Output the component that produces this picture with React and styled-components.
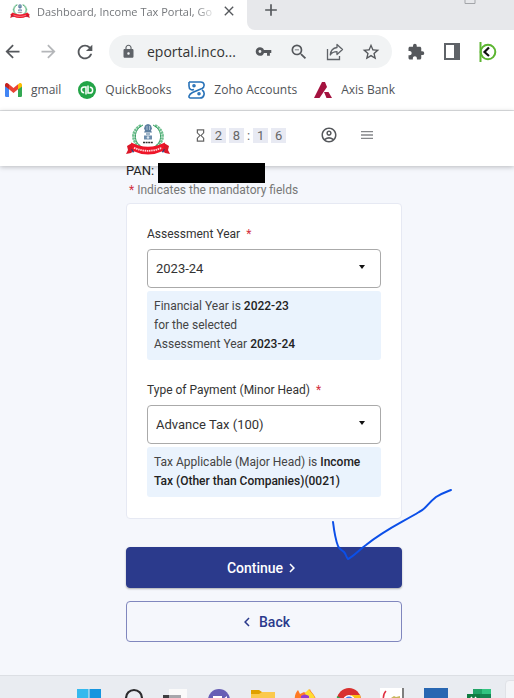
import React from 'react';
import styled, { createGlobalStyle } from 'styled-components';
import {
  MdAdd,
  MdArrowBack,
  MdArrowForward,
  MdChevronLeft,
  MdChevronRight,
  MdClose,
  MdExtension,
  MdHourglassEmpty,
  MdLock,
  MdMenu,
  MdOutlineAccountCircle,
  MdRefresh,
  MdStarBorder,
  MdVpnKey,
  MdZoomOut,
} from 'react-icons/md';

const Emblem = ({ size }) => (
  <svg width={size} height={Math.round(size * 0.78)} viewBox="0 0 44 34" aria-hidden="true">
    <path d="M15 3.500C5 8 5 20 14 24.500M29 3.500C39 8 39 20 30 24.500" fill="none" stroke="#6fc08f" strokeWidth="2.600" strokeDasharray="2.400 .6" />
    <path d="M17 3C7 8 7 20 16 25M27 3C37 8 37 20 28 25" fill="none" stroke="#2f9a5c" strokeWidth="1" />
    <path d="M19 3.500q3-3 6 0l1 3-1 2 1 2h-8l1-2-1-2z" fill="#5d7fa0" />
    <path d="M20 11h4v2h-4z" fill="#9fb5c8" />
    <path d="M18 13.500h8v4h-8z" fill="#6d8dac" />
    <circle cx="22" cy="15.500" r="1.300" fill="#d9e5ef" />
    <path d="M21 4v4M23.500 4v4" stroke="#b8cbdb" strokeWidth=".8" />
    <path d="M17 20.500h10" stroke="#333" strokeWidth="1.300" strokeDasharray="2 .6" />
    <path d="M1 24l5-3 2 7-3 3-5 1 2-4zM43 24l-5-3-2 7 3 3 5 1-2-4z" fill="#db1728" />
    <path d="M5 27l4 1-2 3zM39 27l-4 1 2 3z" fill="#24407c" />
    <path d="M5 20.500q17 8.500 34 0l-2 8.500q-15 7-30 0z" fill="#ee1528" />
    <path d="M8 25.800q14 6 28 0" fill="none" stroke="#ffd7da" strokeWidth="1.800" strokeDasharray="1.500 .7" />
  </svg>
);

const ShareIcon = () => (
  <svg width="18" height="18" viewBox="0 0 18 18" fill="none" stroke="#5f6368" strokeWidth="1.300" aria-hidden="true">
    <path d="M1.500 6v10.500h12V13" />
    <path d="M11 1.500l5.500 5-5.500 5V8.700c-3.500 0-5.500 1.200-6.700 3.300.3-4 2.700-7 6.700-7.500z" strokeLinejoin="round" />
  </svg>
);

const SidePanelIcon = () => (
  <svg width="16" height="17" viewBox="0 0 16 17" aria-hidden="true">
    <path d="M1 1h14v15H1z" fill="none" stroke="#5f6368" strokeWidth="2" />
    <path d="M10 1h6v15h-6z" fill="#5f6368" />
  </svg>
);

const KeeperIcon = () => (
  <svg width="18" height="20" viewBox="0 0 18 20" fill="none" aria-hidden="true">
    <circle cx="9" cy="10" r="7.300" stroke="#5cb531" strokeWidth="2" />
    <path d="M1.500 0v20" stroke="#5cb531" strokeWidth="2" />
    <path d="M10 5.500L5.500 10l4.500 4" stroke="#111" strokeWidth="2.200" />
  </svg>
);

const GmailIcon = () => (
  <svg width="17" height="14" viewBox="0 0 17 14" aria-hidden="true">
    <path d="M0 2.500l4 3V14H1.200Q0 14 0 12.800z" fill="#4285f4" />
    <path d="M17 2.500l-4 3V14h2.800q1.200 0 1.200-1.200z" fill="#34a853" />
    <path d="M13 1.500v5l4-3V2c0-2-2-2.600-3-1.500z" fill="#fbbc04" />
    <path d="M4 1.300L8.500 5 13 1.300v5L8.500 10 4 6.300z" fill="#ea4335" />
    <path d="M0 2C0 0 2-.6 3 .5l1 .8v5l-4-3z" fill="#c5221f" />
  </svg>
);

const QuickBooksIcon = () => (
  <svg width="18" height="18" viewBox="0 0 18 18" aria-hidden="true">
    <circle cx="9" cy="9" r="9" fill="#23a447" />
    <path d="M8 13.500V6H6.200a2.800 2.800 0 000 5.700M10 4.500V12h1.800a2.800 2.800 0 000-5.700" fill="none" stroke="#fff" strokeWidth="1.500" />
  </svg>
);

const ZohoIcon = () => (
  <svg width="17" height="18" viewBox="0 0 17 18" fill="none" stroke="#2872b8" strokeWidth="1.600" strokeLinejoin="round" aria-hidden="true">
    <path d="M1 1h11.500c4.500 0 4.500 5 1.500 6.500L4.500 11.500C.5 13.500 0 17 2.500 17H12c4.500 0 5.500-6 2-8" />
    <path d="M1 1v4c0 3.500 2.500 4.500 5 3.500" />
    <circle cx="6" cy="4.700" r="1" />
    <circle cx="11" cy="12.800" r="1" />
  </svg>
);

const AxisIcon = () => (
  <svg width="18" height="16" viewBox="0 0 18 16" fill="#a4123f" aria-hidden="true">
    <path d="M8 0h3l2 5L5.500 16H0z" />
    <path d="M10 10h4.500L18 16h-5.500z" />
  </svg>
);

const TASKS = [
  {
    name: 'Start',
    art: (
      <>
        <path d="M0 0h11.500v11H0zM0 12h11.500v11H0z" fill="#35b9ee" />
        <path d="M12.500 0H24v11H12.500zM12.500 12H24v11H12.500z" fill="#1695df" />
      </>
    ),
  },
  { name: 'Search', art: <circle cx="14" cy="9" r="8" fill="none" stroke="#2c2c2e" strokeWidth="2.200" /> },
  {
    name: 'Task View',
    art: (
      <>
        <path d="M6 0h18v16H6z" fill="#fafafa" />
        <path d="M0 6h18v14H0z" fill="#3d3d40" />
        <path d="M6 6h12v10H6z" fill="#a7a7ac" />
      </>
    ),
  },
  {
    name: 'Chat',
    art: (
      <>
        <circle cx="13" cy="11" r="11" fill="#675eb5" />
        <path d="M7 7h9v9H7zM17 10l4-3v9l-4-3z" fill="#fff" />
      </>
    ),
  },
  {
    name: 'Files',
    art: (
      <>
        <path d="M2 1h8l3 2h13v18H2z" fill="#e0a000" />
        <path d="M2 5h8l3-2h13v18H2z" fill="#fbc94d" />
      </>
    ),
  },
  {
    name: 'Firefox',
    art: (
      <>
        <path d="M3 12C2 7 4 3 6 1l2 4 4-2c2 2 4-1 6-3 1 4 6 6 6 12a10 10 0 01-21 0z" fill="#ff7a25" />
        <path d="M13 4l4-4c1 4 6 5 6 11h-8z" fill="#ffdc32" />
        <path d="M9 7q4-3 8 0v4H9z" fill="#933bd0" />
      </>
    ),
  },
  {
    name: 'Chrome',
    art: (
      <>
        <circle cx="14" cy="11" r="12" fill="#d9302f" />
        <path d="M2 7l7 4v12C4 20 1 14 2 7z" fill="#32a853" />
        <path d="M16 6h9c2 6 0 13-7 17z" fill="#fbc116" />
        <circle cx="14" cy="12" r="6" fill="#fff" />
        <circle cx="14" cy="12" r="4.500" fill="#4285f4" />
      </>
    ),
  },
  {
    name: 'Paint',
    art: (
      <>
        <path d="M2-1h24v20H2z" fill="#fff" />
        <path d="M25-1v20" stroke="#555" strokeWidth="1.500" />
        <path d="M8 2Q4 6 6 14" fill="none" stroke="#e03142" strokeWidth="1.500" />
        <path d="M13 9l3-2 2 1 4-1v4h-9z" fill="#c9b65d" />
      </>
    ),
  },
  { name: 'Remote Desktop', art: <path d="M3-1h24v20H3z" fill="#2867b2" /> },
  {
    name: 'Excel',
    art: (
      <>
        <path d="M9 0h9v20H9z" fill="#21a366" />
        <path d="M18 0h9v20h-9z" fill="#33c481" />
        <path d="M9 5h18v8H9z" fill="#168451" />
        <path d="M3 5h13v13H3z" fill="#107c41" />
        <path d="M7 8l5 7M12 8l-5 7" stroke="#fff" strokeWidth="1.500" />
      </>
    ),
  },
];

const Field = ({ id, label, value, children }) => (
  <FieldGroup>
    <Label htmlFor={id}>
      {label} <Star>*</Star>
    </Label>
    <SelectWrap>
      <Select id={id} defaultValue={value}>
        <option>{value}</option>
      </Select>
      <Caret />
    </SelectWrap>
    <Hint>{children}</Hint>
  </FieldGroup>
);

const App = () => (
  <Screen>
    <GlobalStyle />
    <TabStrip>
      <Tab>
        <Emblem size={20} />
        <TabTitle>Dashboard, Income Tax Portal, Go</TabTitle>
        <IconButton aria-label="Close tab">
          <MdClose size={16} />
        </IconButton>
      </Tab>
      <StripRest>
        <IconButton aria-label="New tab">
          <MdAdd size={20} />
        </IconButton>
        <svg width="12" height="5" viewBox="0 0 12 5" fill="none" stroke="#a3a5a9" aria-hidden="true">
          <path d="M1 0v3.500h10V0" />
        </svg>
      </StripRest>
    </TabStrip>
    <Toolbar>
      <NavButtons>
        <IconButton aria-label="Back">
          <MdArrowBack size={21} />
        </IconButton>
        <IconButton aria-label="Forward" $color="#b4b6b9">
          <MdArrowForward size={21} />
        </IconButton>
        <IconButton aria-label="Reload">
          <MdRefresh size={22} />
        </IconButton>
      </NavButtons>
      <AddressBar>
        <MdLock size={15} />
        <Address aria-label="Address" defaultValue="eportal.inco..." />
        <AddressActions>
          <IconButton aria-label="Passwords">
            <MdVpnKey size={17} />
          </IconButton>
          <IconButton aria-label="Zoom">
            <MdZoomOut size={20} />
          </IconButton>
          <IconButton aria-label="Share">
            <ShareIcon />
          </IconButton>
          <IconButton aria-label="Bookmark">
            <MdStarBorder size={20} />
          </IconButton>
        </AddressActions>
      </AddressBar>
      <Extensions>
        <IconButton aria-label="Extensions">
          <MdExtension size={18} />
        </IconButton>
        <IconButton aria-label="Side panel">
          <SidePanelIcon />
        </IconButton>
        <IconButton aria-label="Keeper">
          <KeeperIcon />
        </IconButton>
      </Extensions>
    </Toolbar>
    <Bookmarks>
      <Bookmark href="#gmail">
        <GmailIcon />
        gmail
      </Bookmark>
      <Bookmark href="#quickbooks">
        <QuickBooksIcon />
        QuickBooks
      </Bookmark>
      <Bookmark href="#zoho">
        <ZohoIcon />
        Zoho Accounts
      </Bookmark>
      <Bookmark href="#axis">
        <AxisIcon />
        Axis Bank
      </Bookmark>
    </Bookmarks>

    <Header>
      <Emblem size={44} />
      <Timer>
        <MdHourglassEmpty size={15} />
        <Digit>2</Digit>
        <Digit>8</Digit>
        <span>:</span>
        <Digit>1</Digit>
        <Digit>6</Digit>
      </Timer>
      <HeaderActions>
        <IconButton aria-label="Profile">
          <MdOutlineAccountCircle size={18} />
        </IconButton>
        <IconButton aria-label="Menu" $color="#85878a">
          <MdMenu size={16} />
        </IconButton>
      </HeaderActions>
    </Header>

    <Main>
      <PanRow>
        PAN: <Redacted />
      </PanRow>
      <Mandatory>
        <Star>*</Star> Indicates the mandatory fields
      </Mandatory>
      <Card>
        <Field id="year" label="Assessment Year" value="2023-24">
          Financial Year is <b>2022-23</b>
          <br />
          for the selected
          <br />
          Assessment Year <b>2023-24</b>
        </Field>
        <Field id="type" label="Type of Payment (Minor Head)" value="Advance Tax (100)">
          Tax Applicable (Major Head) is <b>Income</b> <b>Tax (Other than Companies)(0021)</b>
        </Field>
      </Card>
      <Actions>
        <Button $primary>
          Continue <MdChevronRight size={18} />
        </Button>
        <Button $gap="3px">
          <MdChevronLeft size={18} /> Back
        </Button>
        <Tick width="122" height="73" viewBox="0 0 122 73" aria-hidden="true">
          <path d="M3 34c1 8 3 19 5 24 1 3 4 4 6 6 2 2 2 5 4 7 6-3 11-9 18-14 20-16 35-22 53-33 7-3 8-8 17-15 6-4 10-5 15-7" />
        </Tick>
      </Actions>
    </Main>

    <Taskbar>
      {TASKS.map(({ name, art }) => (
        <Task key={name} aria-label={name}>
          <svg width="28" height="24" viewBox="0 -1 28 24" aria-hidden="true">
            {art}
          </svg>
        </Task>
      ))}
      <TrayButton aria-label="Tray" />
    </Taskbar>
  </Screen>
);

export default App;

const GlobalStyle = createGlobalStyle`
  * {
    box-sizing: border-box;
  }

  body {
    margin: 0;
    background: #f5f7fc;
    color: #333;
    font-family: Roboto, sans-serif;
    font-size: 12px;
  }

  button, input, select {
    font-family: inherit;
  }

  b {
    color: #222;
    font-weight: 500;
  }

  svg {
    display: block;
    flex: none;
  }
`;

const Screen = styled.div`
  display: flex;
  flex-direction: column;
  min-height: 100vh;
  overflow: hidden;
`;

const IconButton = styled.button`
  display: flex;
  padding: 0;
  border: 0;
  background: none;
  color: ${({ $color }) => $color || '#55585c'};
`;

const TabStrip = styled.div`
  display: flex;
  height: 30px;
  background: #fff;
  font-family: 'Open Sans', 'Noto Sans', sans-serif;
`;

const Tab = styled.div`
  display: flex;
  align-items: center;
  flex: 0 0 247px;
  min-width: 0;
  padding: 0 10px 8px;
`;

const TabTitle = styled.div`
  flex: 1;
  min-width: 0;
  margin: 0 4px 0 7px;
  overflow: hidden;
  color: #74777b;
  font-size: 11px;
  white-space: nowrap;
  mask-image: linear-gradient(to right, #000 88%, transparent);
`;

const StripRest = styled.div`
  display: flex;
  flex: 1;
  align-items: flex-start;
  justify-content: space-between;
  padding: 0 38px 0 14px;
  border-bottom-left-radius: 8px;
  background: #e7e8eb;
`;

const Toolbar = styled.div`
  display: flex;
  align-items: center;
  height: 43px;
  padding: 0 17px 0 2px;
  background: #fff;
`;

const NavButtons = styled.div`
  display: flex;
  flex: 0 0 107px;
  gap: 15px;
`;

const AddressBar = styled.div`
  display: flex;
  flex: 1;
  align-items: center;
  min-width: 0;
  height: 33px;
  padding: 0 11px 0 12px;
  border-radius: 17px;
  background: #f1f3f4;
  color: #5f6368;
`;

const Address = styled.input`
  flex: 1;
  min-width: 0;
  margin-left: 11px;
  padding: 0;
  border: 0;
  background: none;
  color: #333;
  font-family: 'Open Sans', 'Noto Sans', sans-serif;
  font-size: 14px;
`;

const AddressActions = styled.div`
  display: flex;
  align-items: center;
  gap: 17px;
`;

const Extensions = styled.div`
  display: flex;
  align-items: center;
  gap: 19px;
  margin-left: 15px;
`;

const Bookmarks = styled.nav`
  display: flex;
  gap: 17px;
  height: 38px;
  padding: 0 5px 4px;
  border-bottom: 1px solid #dfe1e4;
  background: #fff;
`;

const Bookmark = styled.a`
  display: flex;
  align-items: center;
  gap: 9px;
  color: #505357;
  font-family: 'Open Sans', 'Noto Sans', sans-serif;
  font-size: 12px;
  text-decoration: none;
  white-space: nowrap;
`;

const Header = styled.header`
  display: flex;
  align-items: center;
  position: relative;
  height: 55px;
  padding: 0 112px 0 126px;
  background: #fff;
  box-shadow: 0 1px 5px rgba(0, 0, 0, 0.25);
`;

const Timer = styled.div`
  display: flex;
  align-items: center;
  gap: 3px;
  margin: 0 auto 6px 23px;
  color: #666;
  font-size: 13px;
`;

const Digit = styled.span`
  width: 15px;
  background: #e8eaf3;
  line-height: 15px;
  text-align: center;
`;

const HeaderActions = styled.div`
  display: flex;
  align-items: center;
  gap: 21px;
  margin: 0 27px 8px 0;
`;

const Main = styled.main`
  flex: 1;
  padding: 0 112px 33px 126px;
`;

const PanRow = styled.div`
  display: flex;
  gap: 4px;
  position: relative;
  margin-top: -3px;
  color: #222;
  font-size: 13px;
  line-height: 16px;
`;

const Redacted = styled.span`
  width: 107px;
  height: 20px;
  background: #000;
`;

const Mandatory = styled.p`
  margin: 0 0 6px;
  padding-left: 3px;
  color: #777;
  line-height: 14px;
`;

const Star = styled.span`
  color: #d32f3f;
`;

const Card = styled.section`
  display: flex;
  flex-direction: column;
  gap: 21px;
  padding: 21px 20px;
  border: 1px solid #e6e9f3;
  border-radius: 4px;
  background: #fff;
`;

const FieldGroup = styled.div`
  display: flex;
  flex-direction: column;
`;

const Label = styled.label`
  margin-bottom: 6px;
  line-height: 18px;

  ${Star} {
    margin-left: 3px;
  }
`;

const SelectWrap = styled.div`
  display: grid;
  align-items: center;
`;

const Select = styled.select`
  grid-area: 1 / 1;
  height: 39px;
  padding: 0 8px;
  border: 1px solid #aaa;
  border-radius: 4px;
  background: #fff;
  color: #333;
  font-size: 13px;
  appearance: none;
`;

const Caret = styled.span`
  grid-area: 1 / 1;
  justify-self: end;
  margin: 0 16px 4px 0;
  border: 3px solid transparent;
  border-top: 4px solid #111;
  border-bottom: 0;
  pointer-events: none;
`;

const Hint = styled.div`
  margin-top: 3px;
  padding: 6px 7px;
  border-radius: 3px;
  background: #eaf3fd;
  color: #444;
  line-height: 19px;
`;

const Actions = styled.div`
  display: flex;
  flex-direction: column;
  gap: 13px;
  position: relative;
  margin-top: 28px;
`;

const Button = styled.button`
  display: flex;
  align-items: center;
  justify-content: center;
  gap: ${({ $gap }) => $gap || 0};
  height: 41px;
  padding: 0;
  border: 1px solid ${({ $primary }) => ($primary ? '#2b3a8c' : '#8087be')};
  border-radius: 4px;
  background: ${({ $primary }) => ($primary ? '#2b3a8c' : 'transparent')};
  box-shadow: ${({ $primary }) => ($primary ? '0 1px 2px rgba(0, 0, 0, 0.3)' : 'none')};
  color: ${({ $primary }) => ($primary ? '#fff' : '#2b3a8c')};
  font-size: 14px;
  font-weight: 500;
`;

/* pen stroke drawn over the Continue button */
const Tick = styled.svg`
  position: absolute;
  top: -59px;
  right: -50px;
  fill: none;
  stroke: #0b4fe8;
  stroke-width: 2;
  stroke-linecap: round;
  stroke-linejoin: round;
  pointer-events: none;
`;

const Taskbar = styled.footer`
  display: flex;
  gap: 15px;
  height: 23px;
  padding: 12px 0 0 77px;
  border-top: 1px solid #dcdfe4;
  background: #e9ecf1;
  overflow: hidden;
`;

const Task = styled.button`
  flex: none;
  width: 28px;
  height: 24px;
  padding: 0;
  border: 0;
  background: none;
`;

const TrayButton = styled.button`
  flex: none;
  width: 40px;
  height: 30px;
  margin: -8px 0 0 -2px;
  border: 1px solid #e0e2e7;
  border-radius: 4px;
  background: #f4f5f8;
`;
